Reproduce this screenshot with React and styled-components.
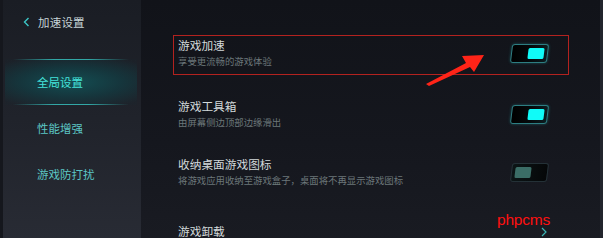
import React from "react";
import styled, { createGlobalStyle } from "styled-components";

const Global = createGlobalStyle`
  html, body { margin: 0; padding: 0; background: #13151c; }
  body { width: 603px; height: 238px; overflow: hidden; font-family: "Noto Sans CJK SC", "Noto Sans", sans-serif; }
  * { box-sizing: border-box; }
`;

const Page = styled.div`
  position: relative;
  display: flex;
  width: 603px;
  height: 238px;
  background: #13151c;
  overflow: hidden;
`;

const Sidebar = styled.aside`
  width: 141px;
  flex: none;
  display: flex;
  flex-direction: column;
  background: linear-gradient(180deg, #1a1d24 0%, #20232b 50%, #282b34 100%);
  border-left: 3px solid #15171d;
`;

const Header = styled.div`
  display: flex;
  align-items: center;
  gap: 8px;
  padding: 14px 0 0 20px;
  height: 29px;
  color: #c7d5d8;
  font-size: 11.5px;
  line-height: 14px;
  letter-spacing: 0.2px;
`;

const Nav = styled.nav`
  display: flex;
  flex-direction: column;
  margin-top: 30px;
`;

const NavItem = styled.div`
  position: relative;
  height: 46px;
  display: flex;
  align-items: center;
  padding-left: 32px;
  font-size: 11.5px;
  color: ${(p) => (p.$active ? "#45e3da" : "#5cc6c4")};
  background: ${(p) =>
    p.$active
      ? "radial-gradient(ellipse 70% 60% at 50% 50%, rgba(16,92,96,0.75) 0%, rgba(14,70,76,0.55) 55%, rgba(20,40,48,0.15) 100%)"
      : "transparent"};
  margin: 0 4px 0 2px;
  &::before, &::after {
    content: "";
    display: ${(p) => (p.$active ? "block" : "none")};
    position: absolute;
    left: 8px;
    right: 8px;
    height: 1px;
    background: linear-gradient(90deg, rgba(40,200,200,0) 0%, rgba(60,220,215,0.7) 35%, rgba(60,220,215,0.7) 65%, rgba(40,200,200,0) 100%);
  }
  &::before { top: 0; }
  &::after { bottom: 0; }
`;

const Main = styled.main`
  flex: 1;
  display: flex;
  flex-direction: column;
  padding: 35px 0 0 32px;
  background: linear-gradient(180deg, #111319 0%, #15171e 60%, #191b22 100%);
  border-right: 3px solid #22252d;
`;

const Row = styled.div`
  width: 396px;
  height: 40px;
  flex: none;
  display: flex;
  justify-content: space-between;
  align-items: flex-start;
  margin-top: ${(p) => p.$mt || 0}px;
  padding: 2px 20px 0 4px;
  border: 1px solid ${(p) => (p.$marked ? "#b3221f" : "transparent")};
`;

const Texts = styled.div`
  display: flex;
  flex-direction: column;
`;

const Title = styled.div`
  font-size: 11.7px;
  line-height: 14px;
  color: #d3dadb;
`;

const Sub = styled.div`
  margin-top: 3px;
  font-size: 9.4px;
  line-height: 12px;
  color: #6c777a;
`;

const Toggle = styled.div`
  position: relative;
  width: 37px;
  height: 19px;
  margin-top: 6px;
  transform: skewX(-7deg);
  border-radius: 3px;
  border: 1px solid ${(p) => (p.$on ? "#2d7e82" : "#243137")};
  background: ${(p) =>
    p.$on
      ? "linear-gradient(90deg, #000 0%, #05090b 50%, #0c1c20 100%)"
      : "linear-gradient(90deg, #0c1516 0%, #050708 100%)"};
  box-shadow: ${(p) => (p.$on ? "0 0 3px rgba(40,160,165,0.45)" : "none")};
`;

const Knob = styled.div`
  position: absolute;
  top: 3px;
  ${(p) => (p.$on ? "right: 3px;" : "left: 3px;")}
  width: 16px;
  height: 11px;
  border-radius: 1.5px;
  background: ${(p) => (p.$on ? "#10fbf8" : "#3b6d66")};
`;

const Chevron = styled.div`
  margin-top: 3px;
  margin-right: 1px;
  display: flex;
`;

const Watermark = styled.div`
  position: absolute;
  left: 497px;
  top: 212px;
  font-family: "Liberation Sans", Arial, sans-serif;
  font-size: 15.5px;
  line-height: 16px;
  color: #ff1010;
  letter-spacing: -0.2px;
`;

const ArrowLayer = styled.svg`
  position: absolute;
  left: 0;
  top: 0;
  pointer-events: none;
`;

const rows = [
  { title: "游戏加速", sub: "享受更流畅的游戏体验", on: true, marked: true, mt: 0 },
  { title: "游戏工具箱", sub: "由屏幕侧边顶部边缘滑出", on: true, mt: 21 },
  { title: "收纳桌面游戏图标", sub: "将游戏应用收纳至游戏盒子，桌面将不再显示游戏图标", on: false, mt: 18 },
];

export default function App() {
  return (
    <>
      <Global />
      <Page>
        <Sidebar>
          <Header>
            <svg width="7" height="10" viewBox="0 0 7 10">
              <path d="M5.5 1 L1.5 5 L5.5 9" fill="none" stroke="#3cc6c6" strokeWidth="1.4" />
            </svg>
            <span>加速设置</span>
          </Header>
          <Nav>
            <NavItem $active>全局设置</NavItem>
            <NavItem>性能增强</NavItem>
            <NavItem>游戏防打扰</NavItem>
          </Nav>
        </Sidebar>
        <Main>
          {rows.map((r) => (
            <Row key={r.title} $marked={r.marked} $mt={r.mt}>
              <Texts>
                <Title>{r.title}</Title>
                <Sub>{r.sub}</Sub>
              </Texts>
              <Toggle $on={r.on}>
                <Knob $on={r.on} />
              </Toggle>
            </Row>
          ))}
          <Row $mt={27}>
            <Texts>
              <Title>游戏卸载</Title>
            </Texts>
            <Chevron>
              <svg width="6" height="10" viewBox="0 0 6 10">
                <path d="M1 1 L5 5 L1 9" fill="none" stroke="#3ab4b4" strokeWidth="1.2" />
              </svg>
            </Chevron>
          </Row>
        </Main>
        <ArrowLayer width="603" height="238" viewBox="0 0 603 238">
          <polygon points="426,84 466,63 462,56 484,55 474,72 470,67 429,86" fill="#ff2418" />
        </ArrowLayer>
        <Watermark>phpcms</Watermark>
      </Page>
    </>
  );
}
